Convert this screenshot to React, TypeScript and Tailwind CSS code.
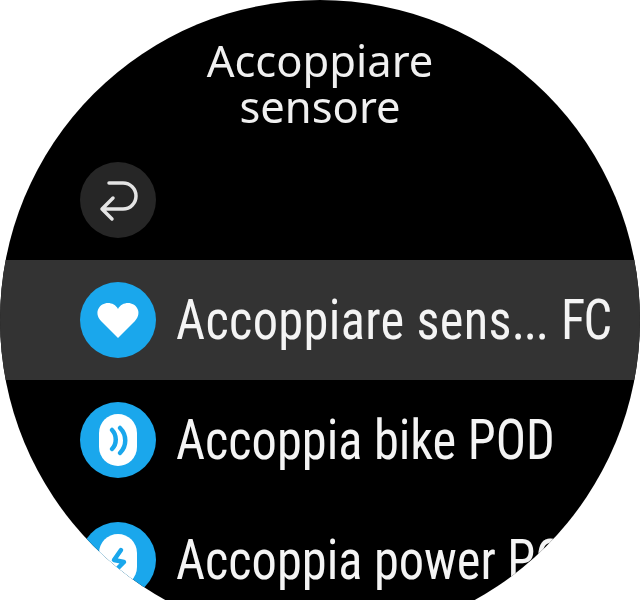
const font = "font-['Liberation_Sans_Narrow','Roboto_Condensed','Liberation_Sans',sans-serif]";

function BackIcon() {
  return (
    <svg width="76" height="76" viewBox="0 0 76 76" fill="none">
      <path
        d="M29 21 H43 A13 13 0 0 1 43 47 H22 M33 36 L22 47 L32 57"
        stroke="#e4e4e4"
        strokeWidth="3.500"
        strokeLinecap="round"
        strokeLinejoin="round"
      />
    </svg>
  );
}

function HeartIcon() {
  return (
    <svg width="76" height="76" viewBox="0 0 76 76">
      <path
        d="M38 56 L21 39 C13 30 20 21 28 21 C32 21 36 23 38 27 C40 23 44 21 48 21 C56 21 63 30 55 39 Z"
        fill="#fff"
      />
    </svg>
  );
}

function PodIcon() {
  return (
    <svg width="76" height="76" viewBox="0 0 76 76">
      <rect x="19" y="12" width="38" height="52" rx="19" fill="#fff" />
      <path d="M32 28 C37 33 37 42 32 47 M40 26 C47 33 47 44 40 51" stroke="#1aa7ec" strokeWidth="4.500" strokeLinecap="round" fill="none" />
    </svg>
  );
}

function PowerIcon() {
  return (
    <svg width="76" height="76" viewBox="0 0 76 76">
      <rect x="19" y="12" width="38" height="52" rx="19" fill="#fff" />
      <path d="M41 28 L34 38 L44 40 L38 46" stroke="#1aa7ec" strokeWidth="4.500" strokeLinecap="round" strokeLinejoin="round" fill="none" />
    </svg>
  );
}

function Row({ icon, children, selected }: { icon: React.ReactNode; children: React.ReactNode; selected?: boolean }) {
  return (
    <div className={`flex h-[120px] items-center gap-5 pl-20 ${selected ? 'bg-[#333333]' : ''}`}>
      <div className="flex h-[76px] w-[76px] shrink-0 items-center justify-center rounded-full bg-[#1aa7ec]">{icon}</div>
      <span className={`${font} origin-left scale-x-[0.9] whitespace-nowrap text-[56px] leading-none text-[#f4f4f4]`}>{children}</span>
    </div>
  );
}

export default function App() {
  return (
    <div className="h-[600px] w-[640px] overflow-hidden bg-white">
      <div className="h-[640px] w-[640px] overflow-hidden rounded-full bg-black blur-[0.5px]">
        <div className="mx-auto h-[140px] w-[300px] pt-[37px] text-center font-['Noto_Sans',sans-serif] text-[43.5px] leading-[46px] text-[#f0f0f0]">
          Accoppiare sensore
        </div>
        <div className="flex h-[120px] items-center pl-20">
          <div className="flex h-[76px] w-[76px] items-center justify-center rounded-full bg-[#262626]">
            <BackIcon />
          </div>
        </div>
        <Row selected icon={<HeartIcon />}>
          <span className="tracking-[0.4px]">Accoppiare sens</span>
          <span className="tracking-[-1.5px]">...</span>
          <span className="ml-1 tracking-[-2px]"> FC</span>
        </Row>
        <Row icon={<PodIcon />}>Accoppia bike POD</Row>
        <Row icon={<PowerIcon />}>Accoppia power POD</Row>
      </div>
    </div>
  );
}
